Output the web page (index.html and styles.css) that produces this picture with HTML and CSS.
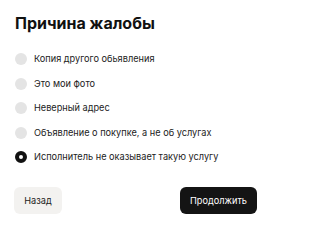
FILE: index.html
```html
<!DOCTYPE html>
<html lang="ru">
<head>
<meta charset="utf-8">
<link rel="stylesheet" href="styles.css">
</head>
<body>
<div class="dialog">
  <h1 class="title">Причина жалобы</h1>
  <ul class="options">
    <li class="option"><span class="radio"></span><span class="label">Копия другого обьявления</span></li>
    <li class="option"><span class="radio"></span><span class="label">Это мои фото</span></li>
    <li class="option"><span class="radio"></span><span class="label">Неверный адрес</span></li>
    <li class="option"><span class="radio"></span><span class="label">Объявление о покупке, а не об услугах</span></li>
    <li class="option"><span class="radio checked"></span><span class="label">Исполнитель не оказывает такую услугу</span></li>
  </ul>
  <div class="actions">
    <button class="btn btn-back">Назад</button>
    <button class="btn btn-next">Продолжить</button>
  </div>
</div>
</body>
</html>
```

FILE: styles.css
```css
html, body {
  margin: 0;
  padding: 0;
  background: #fff;
}
body {
  font-family: Inter, "Noto Sans", sans-serif;
  color: #1c1c1c;
}
.dialog {
  width: 270px;
  box-sizing: border-box;
  padding: 12px 13px 0 14px;
  display: flex;
  flex-direction: column;
}
.title {
  margin: 0 0 0 1px;
  font-size: 16px;
  line-height: 22px;
  font-weight: 700;
  color: #111;
  letter-spacing: 0;
}
.options {
  list-style: none;
  margin: 17px 0 0 0;
  padding: 0;
  display: flex;
  flex-direction: column;
  gap: 8.5px;
}
.option {
  display: flex;
  align-items: center;
  height: 16px;
  gap: 7px;
}
.radio {
  width: 12px;
  height: 12px;
  border-radius: 50%;
  background: #e4e4e4;
  box-sizing: border-box;
  flex: none;
  margin-left: 1px;
}
.radio.checked {
  background: #fff;
  border: 4px solid #111;
}
.label {
  font-size: 9.2px;
  line-height: 14px;
  color: #222;
}
.actions {
  margin-top: 22px;
  display: flex;
  justify-content: space-between;
}
.btn {
  font-family: inherit;
  border: none;
  height: 27px;
  border-radius: 6px;
  font-size: 9.2px;
  padding: 0;
}
.btn-back {
  width: 48px;
  background: #f3f2f0;
  color: #222;
}
.btn-next {
  width: 77px;
  background: #141414;
  color: #fff;
}
```
